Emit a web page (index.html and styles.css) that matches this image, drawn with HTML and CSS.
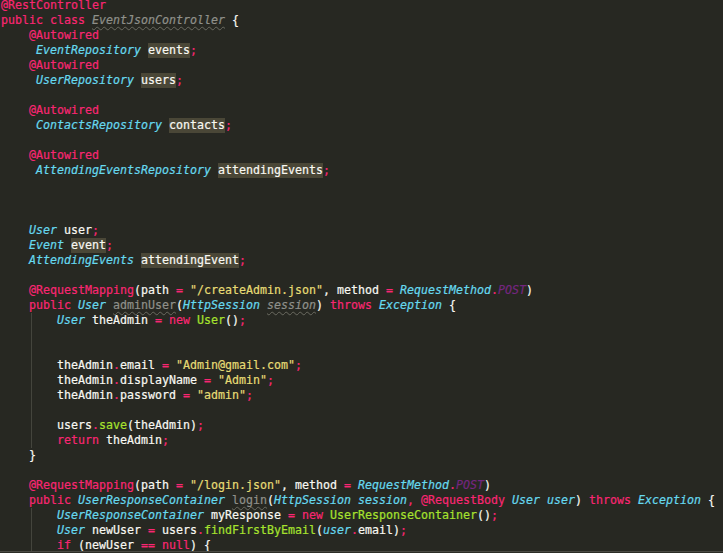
FILE: index.html
```html
<!DOCTYPE html>
<html>
<head>
<meta charset="utf-8">
<link rel="stylesheet" href="styles.css">
</head>
<body>
<div class="editor">
<div class="code">
<div class="line"><span class="k">@RestController</span></div>
<div class="line"><span class="k">public</span> <span class="k">class</span> <span class="w i">EventJsonController</span> {</div>
<div class="line">    <span class="k">@Autowired</span></div>
<div class="line">     <span class="t">EventRepository</span> <span class="h">events</span><span class="k">;</span></div>
<div class="line">    <span class="k">@Autowired</span></div>
<div class="line">     <span class="t">UserRepository</span> <span class="h">users</span><span class="k">;</span></div>
<div class="line"></div>
<div class="line">    <span class="k">@Autowired</span></div>
<div class="line">     <span class="t">ContactsRepository</span> <span class="h">contacts</span><span class="k">;</span></div>
<div class="line"></div>
<div class="line">    <span class="k">@Autowired</span></div>
<div class="line">     <span class="t">AttendingEventsRepository</span> <span class="h">attendingEvents</span><span class="k">;</span></div>
<div class="line"></div>
<div class="line"></div>
<div class="line"></div>
<div class="line">    <span class="t">User</span> user<span class="k">;</span></div>
<div class="line">    <span class="t">Event</span> <span class="h">event</span><span class="k">;</span></div>
<div class="line">    <span class="t">AttendingEvents</span> <span class="h">attendingEvent</span><span class="k">;</span></div>
<div class="line"></div>
<div class="line">    <span class="k">@RequestMapping</span>(path <span class="k">=</span> <span class="s">"/createAdmin.json"</span>, method <span class="k">=</span> <span class="t">RequestMethod</span><span class="k">.</span><span class="c">POST</span>)</div>
<div class="line">    <span class="k">public</span> <span class="t">User</span> <span class="w">adminUser</span>(<span class="t">HttpSession</span> <span class="w i">session</span>) <span class="k">throws</span> <span class="t">Exception</span> {</div>
<div class="line">    <span class="g">    </span><span class="t">User</span> theAdmin <span class="k">=</span> <span class="k">new</span> <span class="f">User</span>()<span class="k">;</span></div>
<div class="line">    <span class="g">    </span></div>
<div class="line">    <span class="g">    </span></div>
<div class="line">    <span class="g">    </span>theAdmin<span class="k">.</span>email <span class="k">=</span> <span class="s">"Admin@gmail.com"</span><span class="k">;</span></div>
<div class="line">    <span class="g">    </span>theAdmin<span class="k">.</span>displayName <span class="k">=</span> <span class="s">"Admin"</span><span class="k">;</span></div>
<div class="line">    <span class="g">    </span>theAdmin<span class="k">.</span>password <span class="k">=</span> <span class="s">"admin"</span><span class="k">;</span></div>
<div class="line">    <span class="g">    </span></div>
<div class="line">    <span class="g">    </span>users<span class="k">.</span><span class="f">save</span>(theAdmin)<span class="k">;</span></div>
<div class="line">    <span class="g">    </span><span class="k">return</span> theAdmin<span class="k">;</span></div>
<div class="line">    }</div>
<div class="line"></div>
<div class="line">    <span class="k">@RequestMapping</span>(path <span class="k">=</span> <span class="s">"/login.json"</span>, method <span class="k">=</span> <span class="t">RequestMethod</span><span class="k">.</span><span class="c">POST</span>)</div>
<div class="line">    <span class="k">public</span> <span class="t">UserResponseContainer</span> <span class="w">login</span>(<span class="t">HttpSession</span> <span class="t">session</span><span class="k">,</span> <span class="k">@RequestBody</span> <span class="t">User</span> <span class="t">user</span>) <span class="k">throws</span> <span class="t">Exception</span> {</div>
<div class="line">    <span class="g">    </span><span class="t">UserResponseContainer</span> myResponse <span class="k">=</span> <span class="k">new</span> <span class="f">UserResponseContainer</span>()<span class="k">;</span></div>
<div class="line">    <span class="g">    </span><span class="t">User</span> newUser <span class="k">=</span> users<span class="k">.</span><span class="f">findFirstByEmail</span>(<span class="t">user</span><span class="k">.</span>email)<span class="k">;</span></div>
<div class="line">    <span class="g">    </span><span class="k">if</span> (newUser <span class="k">==</span> <span class="k">null</span>) {</div>
</div>
</div>
<div class="statusline"></div>
</body>
</html>
```

FILE: styles.css
```css
html, body {
  margin: 0;
  padding: 0;
  background: #272822;
}

body {
  width: 723px;
  height: 553px;
  overflow: hidden;
}

.editor {
  height: 551px;
  overflow: hidden;
  background: #272822;
}

.code {
  margin-top: -2px;
  padding-left: 1px;
  font-family: "DejaVu Sans Mono", "Liberation Mono", monospace;
  font-size: 11.63px;
  line-height: 15px;
  color: #f8f8f2;
  -webkit-text-stroke: 0.2px currentColor;
}

.line {
  height: 15px;
  white-space: pre;
}

.k { color: #f92672; }
.t { color: #66d9ef; font-style: italic; }
.f { color: #a6e22e; }
.s { color: #e6db74; }
.c { color: #74267f; font-style: italic; }
.i { font-style: italic; }

.w {
  color: #8f908a;
  text-decoration-line: underline;
  text-decoration-style: wavy;
  text-decoration-color: #6a6a60;
  text-decoration-thickness: 1px;
  text-underline-offset: 2px;
}

.h {
  display: inline-block;
  vertical-align: top;
  height: 15px;
  background: #4a4737;
}

.g {
  display: inline-block;
  vertical-align: top;
  height: 15px;
  background: linear-gradient(to right, transparent 2px, #44453d 2px, #44453d 3px, transparent 3px);
}

.statusline {
  height: 1px;
  background: #4a4a44;
  border-bottom: 1px solid #2c2d27;
}
```
